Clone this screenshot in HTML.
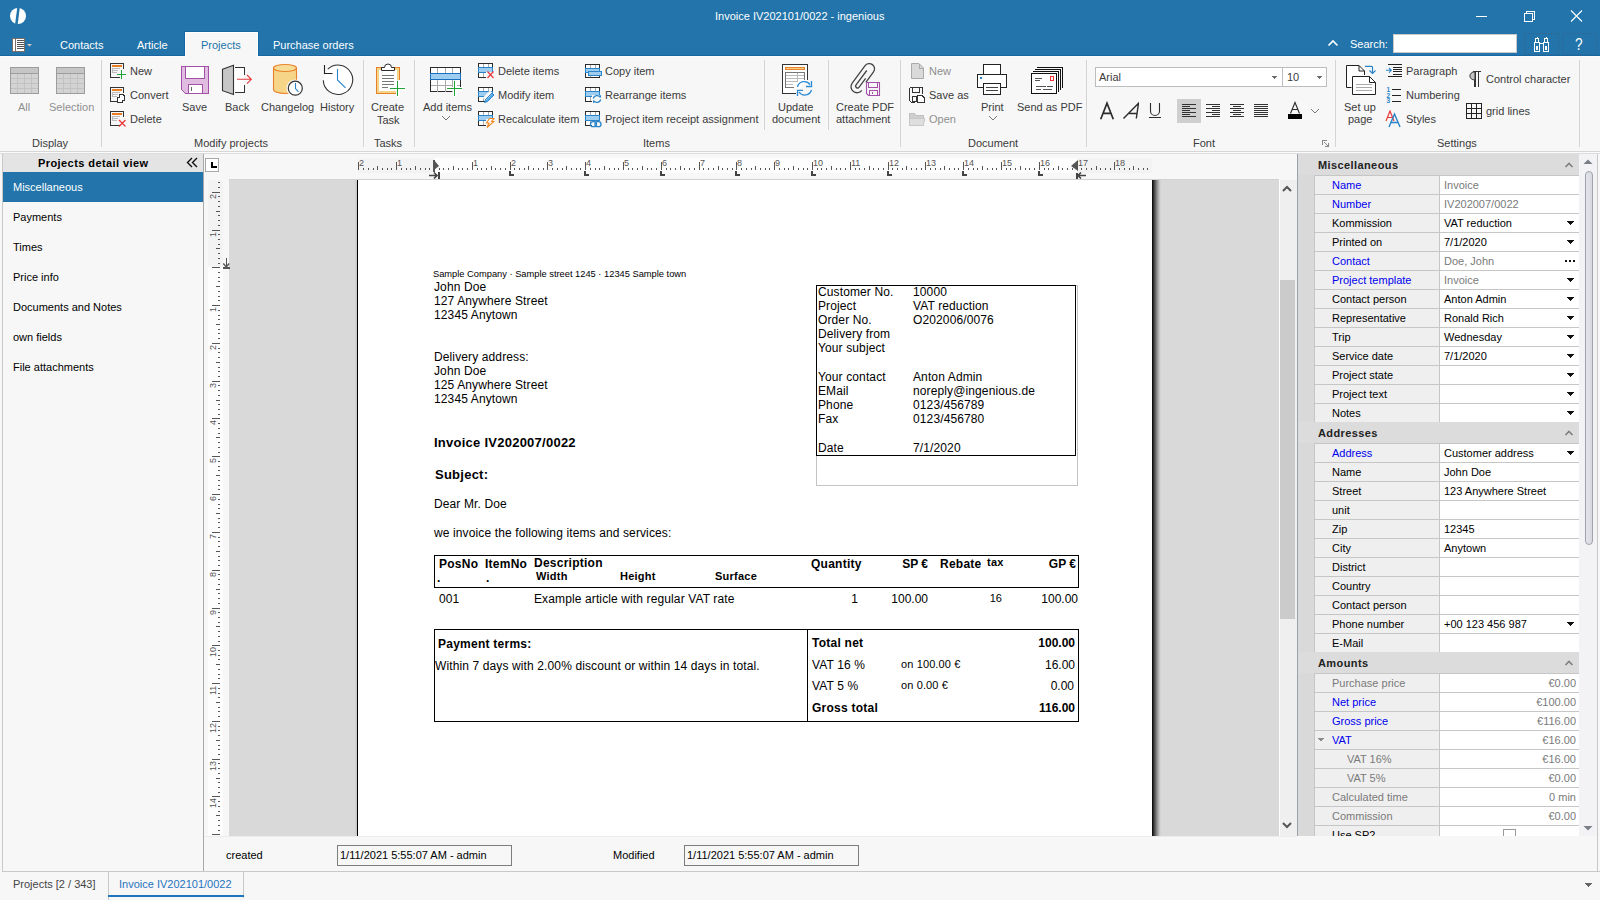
<!DOCTYPE html>
<html><head><meta charset="utf-8"><title>Invoice IV202101/0022 - ingenious</title>
<style>
html,body{margin:0;padding:0;width:1600px;height:900px;overflow:hidden;background:#f7f7f7;}
body{position:relative;font-family:"Liberation Sans",sans-serif;}
.t{position:absolute;white-space:nowrap;line-height:1;font-family:"Liberation Sans",sans-serif;}
.d{position:absolute;white-space:nowrap;line-height:1;font-family:"Liberation Sans",sans-serif;}
.r{position:absolute;display:block;}
svg{shape-rendering:crispEdges;}
svg .a{shape-rendering:geometricPrecision;}
</style></head><body>

<div class="r" style="left:0px;top:0px;width:1600px;height:56px;background:#2274aa;"></div>
<svg class="r" style="left:8px;top:6px;shape-rendering:geometricPrecision" width="20" height="20" viewBox="0 0 20 20"><g class="a"><circle cx="10" cy="10" r="8" fill="#fff"/><path d="M9.3 1 L11.9 1 L9.6 19 L7.0 19 Z" fill="#2274aa"/></g></svg>
<div class="t" style="left:715px;top:11px;font-size:11px;color:#fff;">Invoice IV202101/0022 - ingenious</div>
<div class="r" style="left:1476px;top:16px;width:11px;height:1px;background:#fff;"></div>
<svg class="r" style="left:1520px;top:8px;" width="16" height="16" viewBox="0 0 16 16"><rect x="4.5" y="5.5" width="8" height="8" fill="none" stroke="#fff"/><path d="M6.5 5.5 V3.5 H14.5 V11.5 H12.5" fill="none" stroke="#fff"/></svg>
<svg class="r" style="left:1568px;top:8px;shape-rendering:geometricPrecision" width="16" height="16" viewBox="0 0 16 16"><path class="a" d="M3 2.5 L14 13.5 M14 2.5 L3 13.5" stroke="#fff" stroke-width="1.1"/></svg>
<svg class="r" style="left:10px;top:36px;" width="24" height="18" viewBox="0 0 24 18"><rect x="2.5" y="2.5" width="12" height="13" fill="#fff" stroke="#7a6e66"/><rect x="5" y="3" width="1" height="12" fill="#7a6e66"/><rect x="7" y="4" width="7" height="1" fill="#555"/><rect x="7" y="6" width="7" height="1" fill="#555"/><rect x="7" y="8" width="7" height="1" fill="#555"/><rect x="7" y="10" width="7" height="1" fill="#555"/><rect x="7" y="12" width="7" height="1" fill="#555"/><path d="M17 8 h5 l-2.5 2.6 z" fill="#d0c8c0" style="shape-rendering:geometricPrecision"/></svg>
<div class="t" style="left:60px;top:40px;font-size:11px;color:#fff;">Contacts</div>
<div class="t" style="left:137px;top:40px;font-size:11px;color:#fff;">Article</div>
<div class="r" style="left:0px;top:55px;width:1600px;height:1px;background:#1768a2;"></div>
<div class="r" style="left:0px;top:56px;width:1600px;height:1px;background:#fdfdfd;"></div>
<div class="r" style="left:184px;top:31px;width:75px;height:25px;background:#1768a2;"></div>
<div class="r" style="left:185px;top:32px;width:73px;height:25px;background:#fff;"></div>
<div class="r" style="left:186px;top:33px;width:71px;height:24px;background:#f7f7f7;"></div>
<div class="t" style="left:201px;top:40px;font-size:11px;color:#2274aa;">Projects</div>
<div class="t" style="left:273px;top:40px;font-size:11px;color:#fff;">Purchase orders</div>
<svg class="r" style="left:1326px;top:38px;shape-rendering:geometricPrecision" width="14" height="10" viewBox="0 0 14 10"><path class="a" d="M2.5 7.5 L7 3 L11.5 7.5" fill="none" stroke="#fff" stroke-width="1.6"/></svg>
<div class="t" style="left:1350px;top:39px;font-size:11px;color:#fff;">Search:</div>
<div class="r" style="left:1393px;top:34px;width:124px;height:19px;background:#fff;box-sizing:border-box;border:1px solid #c9c9c9"></div>
<div class="r" style="left:1524px;top:33px;width:35px;height:22px;background:transparent;box-sizing:border-box;border:1px solid #2a6d9c"></div>
<svg class="r" style="left:1533px;top:35px;" width="18" height="18" viewBox="0 0 18 18"><g fill="none" stroke="#fff"><rect x="1.5" y="7.5" width="5" height="9"/><rect x="10.5" y="7.5" width="5" height="9"/><rect x="2.5" y="3.5" width="3" height="4"/><rect x="11.5" y="3.5" width="3" height="4"/><path d="M6.5 8.5 H10.5 M4 1.5 V3.5 M13 1.5 V3.5"/><rect x="3.5" y="11.5" width="1" height="3"/><rect x="12.5" y="11.5" width="1" height="3"/></g></svg>
<div class="r" style="left:1562px;top:33px;width:35px;height:22px;background:transparent;box-sizing:border-box;border:1px solid #2a6d9c"></div>
<div class="t" style="left:1575px;top:37px;font-size:16px;color:#fff;transform:scaleX(0.85);transform-origin:left">?</div>
<div class="r" style="left:0px;top:151px;width:1600px;height:1px;background:#d6d6d6;"></div>
<div class="r" style="left:0px;top:152px;width:1600px;height:1px;background:#fbfbfb;"></div>
<div class="r" style="left:0px;top:153px;width:1600px;height:1px;background:#dcdcdc;"></div>
<div class="r" style="left:101px;top:60px;width:1px;height:87px;background:#d4d4d4;"></div>
<div class="r" style="left:363px;top:60px;width:1px;height:87px;background:#d4d4d4;"></div>
<div class="r" style="left:414px;top:60px;width:1px;height:87px;background:#d4d4d4;"></div>
<div class="r" style="left:900px;top:60px;width:1px;height:87px;background:#d4d4d4;"></div>
<div class="r" style="left:1086px;top:60px;width:1px;height:87px;background:#d4d4d4;"></div>
<div class="r" style="left:1335px;top:60px;width:1px;height:87px;background:#d4d4d4;"></div>
<div class="r" style="left:1579px;top:60px;width:1px;height:87px;background:#d4d4d4;"></div>
<div class="r" style="left:764px;top:60px;width:1px;height:70px;background:#d4d4d4;"></div>
<div class="r" style="left:828px;top:60px;width:1px;height:70px;background:#d4d4d4;"></div>
<div class="t" style="left:32px;top:138px;font-size:11px;color:#3b3b3b;">Display</div>
<div class="t" style="left:194px;top:138px;font-size:11px;color:#3b3b3b;">Modify projects</div>
<div class="t" style="left:374px;top:138px;font-size:11px;color:#3b3b3b;">Tasks</div>
<div class="t" style="left:643px;top:138px;font-size:11px;color:#3b3b3b;">Items</div>
<div class="t" style="left:968px;top:138px;font-size:11px;color:#3b3b3b;">Document</div>
<div class="t" style="left:1193px;top:138px;font-size:11px;color:#3b3b3b;">Font</div>
<div class="t" style="left:1437px;top:138px;font-size:11px;color:#3b3b3b;">Settings</div>
<svg class="r" style="left:10px;top:67px;" width="30" height="28" viewBox="0 0 30 28"><rect x="0.5" y="0.5" width="28" height="26" fill="#d3d3d3" stroke="#9c9c9c"/><rect x="1" y="1" width="27" height="5" fill="#c6c6c6"/><path d="M1 6.5 H28" stroke="#9c9c9c"/><path d="M7.5 7 V26 M14.5 7 V26 M21.5 7 V26 M1 11.5 H28 M1 16.5 H28 M1 21.5 H28" stroke="#c2c2c2"/></svg>
<svg class="r" style="left:56px;top:67px;" width="30" height="28" viewBox="0 0 30 28"><rect x="0.5" y="0.5" width="28" height="26" fill="#d3d3d3" stroke="#9c9c9c"/><rect x="1" y="1" width="27" height="5" fill="#c6c6c6"/><path d="M1 6.5 H28" stroke="#9c9c9c"/><path d="M7.5 7 V26 M14.5 7 V26 M21.5 7 V26 M1 11.5 H28 M1 16.5 H28 M1 21.5 H28" stroke="#c2c2c2"/></svg>
<div class="t" style="left:18px;top:102px;font-size:11px;color:#8f8f8f;">All</div>
<div class="t" style="left:49px;top:102px;font-size:11px;color:#8f8f8f;">Selection</div>
<svg class="r" style="left:110px;top:63px;" width="17" height="17" viewBox="0 0 17 17"><path d="M9.5 14.5 H0.5 V0.5 H13.5 V6" fill="none" stroke="#333"/><rect x="2" y="2" width="10" height="2" fill="#e87d22"/><rect x="2" y="5" width="8" height="1" fill="#bbb"/><rect x="2" y="7" width="6" height="1" fill="#bbb"/><rect x="2" y="9" width="5" height="1" fill="#bbb"/><rect x="2" y="6" width="1" height="4" fill="#bbb"/><path d="M7 11.5 H16 M11.5 7 V16" stroke="#1fa43a" stroke-width="1.2"/></svg>
<svg class="r" style="left:110px;top:87px;" width="17" height="17" viewBox="0 0 17 17"><path d="M9.5 14.5 H0.5 V0.5 H13.5 V6" fill="none" stroke="#333"/><rect x="2" y="2" width="10" height="2" fill="#e87d22"/><rect x="2" y="5" width="8" height="1" fill="#bbb"/><rect x="2" y="7" width="6" height="1" fill="#bbb"/><rect x="2" y="9" width="5" height="1" fill="#bbb"/><rect x="2" y="6" width="1" height="4" fill="#bbb"/><rect x="7.5" y="10.5" width="5" height="5" fill="#fff" stroke="#333"/><path d="M9.5 10.5 V7.5 H13 L14.5 9 V13.5 H12.5" fill="#fff" stroke="#333"/></svg>
<svg class="r" style="left:110px;top:111px;" width="17" height="17" viewBox="0 0 17 17"><path d="M9.5 14.5 H0.5 V0.5 H13.5 V6" fill="none" stroke="#333"/><rect x="2" y="2" width="10" height="2" fill="#e87d22"/><rect x="2" y="5" width="8" height="1" fill="#bbb"/><rect x="2" y="7" width="6" height="1" fill="#bbb"/><rect x="2" y="9" width="5" height="1" fill="#bbb"/><rect x="2" y="6" width="1" height="4" fill="#bbb"/><path class="a" d="M9 9 L15.5 15.5 M15.5 9 L9 15.5" stroke="#e33" stroke-width="1.2" style="shape-rendering:geometricPrecision"/></svg>
<div class="t" style="left:130px;top:66px;font-size:11px;color:#3b3b3b;">New</div>
<div class="t" style="left:130px;top:90px;font-size:11px;color:#3b3b3b;">Convert</div>
<div class="t" style="left:130px;top:114px;font-size:11px;color:#3b3b3b;">Delete</div>
<svg class="r" style="left:181px;top:66px;" width="29" height="29" viewBox="0 0 29 29"><path d="M0.5 0.5 H27.5 V27.5 H4.5 L0.5 23.5 Z" fill="#e0bde0" stroke="#a350a8"/><rect x="4.5" y="0.5" width="19" height="12" fill="#fff" stroke="#a350a8"/><rect x="7.5" y="18.5" width="14" height="9" fill="#fff" stroke="#a350a8"/><rect x="10" y="21" width="1" height="4" fill="#666"/></svg>
<div class="t" style="left:182px;top:102px;font-size:11px;color:#3b3b3b;">Save</div>
<svg class="r" style="left:218px;top:60px;" width="40" height="40" viewBox="0 0 40 40"><rect x="16" y="7" width="10" height="26" fill="#fff"/><path d="M4.5 9.3 L15.5 5.3 V34.5 L4.5 30.7 Z" fill="#c6c6c6" stroke="#333" stroke-width="1.1" style="shape-rendering:geometricPrecision"/><path d="M17 7.5 H26.5 V14.5 M26.5 24.5 V32.5 H17" fill="none" stroke="#333"/><path d="M19 19.3 H33.2 M29 15 L33.3 19.3 L29 23.6" fill="none" stroke="#e83a3a" stroke-width="1.1" style="shape-rendering:geometricPrecision"/></svg>
<div class="t" style="left:225px;top:102px;font-size:11px;color:#3b3b3b;">Back</div>
<svg class="r" style="left:272px;top:63px;" width="34" height="34" viewBox="0 0 34 34"><g style="shape-rendering:geometricPrecision"><path d="M1.5 5 V26.5 A11.5 4 0 0 0 24.5 26.5 V5 Z" fill="#f6d588" stroke="#e8822a" stroke-width="1.1"/><ellipse cx="13" cy="5" rx="11.5" ry="3.5" fill="#f7dc98" stroke="#e8822a" stroke-width="1.1"/><circle cx="23.3" cy="25.2" r="8.8" fill="#f7f7f7"/><circle cx="23.3" cy="25.2" r="7" fill="#fff" stroke="#333" stroke-width="1.2"/><path d="M23.5 20 V25.5 L26.5 28.8" fill="none" stroke="#2a84c9" stroke-width="1.1"/></g></svg>
<div class="t" style="left:261px;top:102px;font-size:11px;color:#3b3b3b;">Changelog</div>
<svg class="r" style="left:318px;top:60px;" width="40" height="40" viewBox="0 0 40 40"><g style="shape-rendering:geometricPrecision" fill="none"><circle cx="20" cy="19.8" r="14.2" fill="#fff" stroke="none"/><path d="M5.3 20.2 A14.7 14.7 0 1 0 9.8 9.2" stroke="#333" stroke-width="1.1"/><path d="M6.5 5 V13.5 H14.5" stroke="#222" stroke-width="1.1"/><path d="M19.5 9 V20 L27.5 27.8" stroke="#2a84c9" stroke-width="1.1"/></g></svg>
<div class="t" style="left:320px;top:102px;font-size:11px;color:#3b3b3b;">History</div>
<svg class="r" style="left:370px;top:60px;" width="40" height="40" viewBox="0 0 40 40"><rect x="6.5" y="7.5" width="23" height="26" fill="#f6d588" stroke="#e8822a"/><rect x="9" y="10" width="18" height="21" fill="#fff"/><path d="M11.5 7.5 H14.5 A3.5 3.5 0 0 1 21.5 7.5 H24.5 V10.5 H11.5 Z" fill="#fff" stroke="#2b2b2b" style="shape-rendering:geometricPrecision"/><path d="M12 15.5 H24 M12 18.5 H24 M12 21.5 H24 M12 24.5 H24 M12 27.5 H18" stroke="#777"/><path d="M19 28.5 H36 M27.5 20 V37" stroke="#fff" stroke-width="4"/><path d="M20 28.5 H35 M27.5 21 V36" stroke="#1fa43a" stroke-width="1.3"/></svg>
<div class="t" style="left:371px;top:102px;font-size:11px;color:#3b3b3b;">Create</div>
<div class="t" style="left:377px;top:115px;font-size:11px;color:#3b3b3b;">Task</div>
<svg class="r" style="left:425px;top:60px;" width="40" height="40" viewBox="0 0 40 40"><rect x="5.5" y="7.5" width="30" height="24" fill="#fff" stroke="#2b2b2b"/><path d="M12.5 8 V13 M20.5 8 V13 M27.5 8 V13 M12.5 20 V32 M20.5 20 V32 M27.5 20 V32 M6 25.5 H35" stroke="#aaa"/><rect x="5.6" y="13.6" width="29.8" height="5.8" fill="#9fcdf0" stroke="#1a6fc0" stroke-width="1.2"/><rect x="31" y="29.5" width="6" height="4" fill="#f7f7f7"/><path d="M21 28.5 H38 M29.5 20 V37" stroke="#fff" stroke-width="4"/><path d="M22 28.5 H37 M29.5 21 V36" stroke="#1fa43a" stroke-width="1.3"/></svg>
<div class="t" style="left:423px;top:102px;font-size:11px;color:#3b3b3b;">Add items</div>
<svg class="r" style="left:441px;top:115px;" width="10" height="6" viewBox="0 0 10 6"><path d="M1 1 L5 5 L9 1" fill="none" stroke="#777" style="shape-rendering:geometricPrecision"/></svg>
<svg class="r" style="left:478px;top:63px;" width="17" height="17" viewBox="0 0 17 17"><rect x="0.5" y="0.5" width="14" height="14" fill="#fff" stroke="#2b2b2b"/><path d="M5.5 1 V4 M10.5 1 V4 M5.5 10 V14 M10.5 10 V14" stroke="#aaa"/><rect x="0.5" y="4.5" width="14" height="5" fill="#9fcdf0" stroke="#2a84c9"/><rect x="8" y="9" width="8" height="8" fill="#f7f7f7"/><path d="M9.5 8.5 L15.5 15 M15.5 8.5 L9.5 15" stroke="#e8393f" stroke-width="1.2" style="shape-rendering:geometricPrecision"/></svg>
<svg class="r" style="left:478px;top:87px;" width="17" height="17" viewBox="0 0 17 17"><rect x="0.5" y="0.5" width="14" height="14" fill="#fff" stroke="#2b2b2b"/><path d="M5.5 1 V4 M10.5 1 V4 M5.5 10 V14 M10.5 10 V14" stroke="#aaa"/><rect x="0.5" y="4.5" width="14" height="5" fill="#9fcdf0" stroke="#2a84c9"/><rect x="7" y="6" width="10" height="10" fill="#f7f7f7" transform="rotate(-45 11.5 11)" style="shape-rendering:geometricPrecision"/><path d="M6.5 15.5 L7.5 12.5 L14 6 L16 8 L9.5 14.5 Z" fill="#5aaae6" stroke="#2a84c9" style="shape-rendering:geometricPrecision"/><path d="M8.5 12.5 L14 7" stroke="#fff" stroke-width="0.6" stroke-dasharray="1 1" style="shape-rendering:geometricPrecision"/></svg>
<svg class="r" style="left:478px;top:111px;" width="17" height="17" viewBox="0 0 17 17"><rect x="0.5" y="0.5" width="14" height="14" fill="#fff" stroke="#2b2b2b"/><path d="M5.5 1 V4 M10.5 1 V4 M5.5 10 V14 M10.5 10 V14" stroke="#aaa"/><rect x="0.5" y="4.5" width="14" height="5" fill="#9fcdf0" stroke="#2a84c9"/><rect x="8" y="8" width="9" height="9" fill="#f7f7f7"/><path d="M11.5 7.5 H16 L13.5 10.5 H16 L9 16.5 L11 12 H8.5 Z" fill="#fff" stroke="#ef8a22" stroke-width="1.1" style="shape-rendering:geometricPrecision"/></svg>
<div class="t" style="left:498px;top:66px;font-size:11px;color:#3b3b3b;">Delete items</div>
<div class="t" style="left:498px;top:90px;font-size:11px;color:#3b3b3b;">Modify item</div>
<div class="t" style="left:498px;top:114px;font-size:11px;color:#3b3b3b;">Recalculate item</div>
<svg class="r" style="left:585px;top:64px;" width="17" height="17" viewBox="0 0 17 17"><rect x="0.5" y="0.5" width="14" height="13" fill="#fff" stroke="#2b2b2b"/><path d="M5.5 1 V4 M10.5 1 V4 M5.5 10 V13" stroke="#aaa"/><rect x="0.5" y="4.5" width="14" height="4" fill="#9fcdf0" stroke="#2a84c9"/><rect x="3.5" y="7.5" width="13" height="4" fill="#9fcdf0" stroke="#2a84c9"/></svg>
<svg class="r" style="left:585px;top:87px;" width="17" height="17" viewBox="0 0 17 17"><rect x="0.5" y="0.5" width="14" height="14" fill="#fff" stroke="#2b2b2b"/><path d="M5.5 1 V4 M10.5 1 V4 M5.5 10 V14 M10.5 10 V14" stroke="#aaa"/><rect x="0.5" y="4.5" width="14" height="5" fill="#9fcdf0" stroke="#2a84c9"/><rect x="7" y="8" width="10" height="9" fill="#f7f7f7"/><g style="shape-rendering:geometricPrecision" fill="none" stroke="#2a84c9" stroke-width="1.3"><path d="M8.2 11.5 A4 4 0 0 1 15.2 10.2"/><path d="M15.8 12.5 A4 4 0 0 1 8.8 13.8"/></g><path d="M13.5 9 L16 8 L16 11 Z M10.5 15 L8 16 L8 13 Z" fill="#2a84c9" style="shape-rendering:geometricPrecision"/></svg>
<svg class="r" style="left:585px;top:111px;" width="17" height="17" viewBox="0 0 17 17"><rect x="0.5" y="0.5" width="14" height="14" fill="#fff" stroke="#2b2b2b"/><path d="M5.5 1 V4 M10.5 1 V4 M5.5 10 V14 M10.5 10 V14" stroke="#aaa"/><rect x="0.5" y="4.5" width="14" height="5" fill="#9fcdf0" stroke="#2a84c9"/><rect x="7" y="10" width="10" height="7" fill="#f7f7f7"/><g style="shape-rendering:geometricPrecision" fill="none" stroke="#2a84c9" stroke-width="1.3"><rect x="5.5" y="10.7" width="6" height="5" rx="2.5"/><rect x="10" y="10.7" width="6" height="5" rx="2.5"/></g></svg>
<div class="t" style="left:605px;top:66px;font-size:11px;color:#3b3b3b;">Copy item</div>
<div class="t" style="left:605px;top:90px;font-size:11px;color:#3b3b3b;">Rearrange items</div>
<div class="t" style="left:605px;top:114px;font-size:11px;color:#3b3b3b;">Project item receipt assignment</div>
<svg class="r" style="left:778px;top:60px;" width="36" height="38" viewBox="0 0 36 38"><path d="M17.5 33.5 H4.5 V4.5 H29.5 V19.5" fill="#fff" stroke="#333" stroke-width="1.2"/><rect x="7.5" y="7.5" width="19" height="2" fill="#f6d588" stroke="#e8822a"/><path d="M15.5 27.5 H7.5 V12.5 H26.5 V20" fill="none" stroke="#777"/><path d="M8 15.5 H26 M8 18.5 H26 M8 21.5 H20 M8 24.5 H15 M19.5 13 V21" stroke="#bbb"/><g style="shape-rendering:geometricPrecision" fill="none" stroke="#2a8ad4" stroke-width="1.3"><path d="M19.5 27 A7 7 0 0 1 32 24.5"/><path d="M33.5 30 A7 7 0 0 1 21 32"/><path d="M28 26.5 H33.5 V21"/><path d="M25 30.3 H19.5 V36"/></g></svg>
<div class="t" style="left:778px;top:102px;font-size:11px;color:#3b3b3b;">Update</div>
<div class="t" style="left:772px;top:114px;font-size:11px;color:#3b3b3b;">document</div>
<svg class="r" style="left:845px;top:60px;" width="38" height="38" viewBox="0 0 38 38"><g transform="translate(18.45,18) rotate(36.5)" fill="none" stroke="#444" stroke-width="1.3" style="shape-rendering:geometricPrecision"><path d="M6 10.85 A6 6 0 0 1 -6 10.85 L-6 -10.85 A5.25 5.25 0 0 1 4.5 -10.85 L4.5 2"/><path d="M-1.8 -8 L-1.8 10 A1.9 1.9 0 0 0 2 10 L2 -1"/></g><path d="M21.5 22.5 H34.5 V35.5 H23.5 L21.5 33.5 Z" fill="#f7f7f7" stroke="#a350a8" stroke-width="1.1" style="shape-rendering:geometricPrecision"/><path d="M23.5 22.5 V27.5 H32.5 V22.5" fill="none" stroke="#a350a8"/><path d="M24.5 35.5 V30.5 H32.5 V35.5" fill="none" stroke="#a350a8"/><rect x="27" y="32" width="1" height="2" fill="#a350a8"/></svg>
<div class="t" style="left:836px;top:102px;font-size:11px;color:#3b3b3b;">Create PDF</div>
<div class="t" style="left:836px;top:114px;font-size:11px;color:#3b3b3b;">attachment</div>
<svg class="r" style="left:910px;top:62px;" width="16" height="18" viewBox="0 0 16 18"><path d="M1.5 1.5 H9 L13.5 6 V16.5 H1.5 Z" fill="#d9d9d9" stroke="#aaa" style="shape-rendering:geometricPrecision"/><path d="M9 1.5 V6 H13.5" fill="none" stroke="#aaa"/></svg>
<div class="t" style="left:929px;top:66px;font-size:11px;color:#8f8f8f;">New</div>
<svg class="r" style="left:908px;top:86px;" width="18" height="18" viewBox="0 0 18 18"><path d="M1.5 1.5 H14.5 V8 M1.5 1.5 V14.5 L3.5 16.5 H7" fill="none" stroke="#333"/><path d="M4.5 1.5 V6.5 H11.5 V1.5" fill="none" stroke="#333"/><rect x="4.5" y="10.5" width="4" height="5" fill="none" stroke="#333"/><path d="M9.5 9.5 H14 L16.5 12 V16.5 H9.5 Z" fill="#fff" stroke="#333"/></svg>
<div class="t" style="left:929px;top:90px;font-size:11px;color:#3b3b3b;">Save as</div>
<svg class="r" style="left:908px;top:110px;" width="18" height="18" viewBox="0 0 18 18"><path d="M1.5 3.5 H6.5 L8 5 H15.5 V15.5 H1.5 Z" fill="#cfcfcf" stroke="#c0c0c0"/><path d="M1.5 8.5 H16.5 L15.5 15.5 H1.5 Z" fill="#dedede" stroke="#c8c8c8"/></svg>
<div class="t" style="left:929px;top:114px;font-size:11px;color:#8f8f8f;">Open</div>
<svg class="r" style="left:977px;top:64px;" width="32" height="32" viewBox="0 0 32 32"><rect x="6.5" y="0.5" width="17" height="10" fill="#fff" stroke="#222"/><rect x="0.5" y="10.5" width="29" height="13" fill="#fff" stroke="#222"/><rect x="3" y="13" width="2" height="2" fill="#2a84c9"/><rect x="6.5" y="19.5" width="17" height="11" fill="#fff" stroke="#222"/><path d="M9 23.5 H21 M9 26.5 H21" stroke="#444"/></svg>
<div class="t" style="left:981px;top:102px;font-size:11px;color:#3b3b3b;">Print</div>
<svg class="r" style="left:988px;top:115px;" width="10" height="6" viewBox="0 0 10 6"><path d="M1 1 L5 5 L9 1" fill="none" stroke="#777" style="shape-rendering:geometricPrecision"/></svg>
<svg class="r" style="left:1031px;top:67px;" width="35" height="28" viewBox="0 0 35 28"><path d="M5.5 0.5 H31.5 V21 M4 2.5 H29.5 V23 M2 4.5 H27.5 V25" fill="none" stroke="#111"/><rect x="0.5" y="6.5" width="25" height="20" fill="#fff" stroke="#111"/><path d="M4 11.5 H11 M4 13.5 H9 M5 19.5 H15 M5 22.5 H10 M12 22.5 H21 M16 19.5 H22" stroke="#555"/><rect x="19.5" y="9.5" width="3" height="4" fill="none" stroke="#e33"/></svg>
<div class="t" style="left:1017px;top:102px;font-size:11px;color:#3b3b3b;">Send as PDF</div>
<div class="r" style="left:1095px;top:67px;width:232px;height:20px;background:#fff;box-sizing:border-box;border:1px solid #bdbdbd"></div>
<div class="r" style="left:1282px;top:68px;width:1px;height:18px;background:#bdbdbd;"></div>
<div class="t" style="left:1099px;top:72px;font-size:11px;color:#3b3b3b;">Arial</div>
<div class="t" style="left:1287px;top:72px;font-size:11px;color:#3b3b3b;">10</div>
<svg class="r" style="left:1271px;top:76px;" width="7" height="4" viewBox="0 0 7 4"><path d="M0 0 H6 L3 3 Z" fill="#6d6d6d"/></svg>
<svg class="r" style="left:1316px;top:76px;" width="7" height="4" viewBox="0 0 7 4"><path d="M0 0 H6 L3 3 Z" fill="#6d6d6d"/></svg>
<svg class="r" style="left:1098px;top:101px;" width="18" height="19" viewBox="0 0 18 19"><path d="M3 17.5 L9 2.2 L15 17.5 M5.6 12.3 H12.4" fill="none" stroke="#2b2b2b" stroke-width="1.7" stroke-linecap="square" style="shape-rendering:geometricPrecision"/></svg>
<svg class="r" style="left:1121px;top:101px;" width="18" height="19" viewBox="0 0 18 19"><path d="M2.5 17.5 L17.5 2.3 L15.3 17.5 M8.2 12.5 H16" fill="none" stroke="#2b2b2b" stroke-width="1.4" style="shape-rendering:geometricPrecision"/></svg>
<svg class="r" style="left:1148px;top:102px;" width="14" height="18" viewBox="0 0 14 18"><path d="M2.5 1 V9 A4.5 4.5 0 0 0 11.5 9 V1" fill="none" stroke="#2b2b2b" stroke-width="1.1" style="shape-rendering:geometricPrecision"/><rect x="1" y="15" width="12" height="1" fill="#2b2b2b"/></svg>
<div class="r" style="left:1177px;top:99px;width:24px;height:24px;background:#cfcfcf;"></div>
<svg class="r" style="left:1182px;top:104px;" width="15" height="14" viewBox="0 0 15 14"><rect x="0" y="0" width="14" height="1" fill="#333"/><rect x="0" y="2" width="8" height="1" fill="#333"/><rect x="0" y="4" width="14" height="1" fill="#333"/><rect x="0" y="6" width="8" height="1" fill="#333"/><rect x="0" y="8" width="14" height="1" fill="#333"/><rect x="0" y="10" width="8" height="1" fill="#333"/><rect x="0" y="12" width="14" height="1" fill="#333"/></svg>
<svg class="r" style="left:1206px;top:104px;" width="15" height="14" viewBox="0 0 15 14"><rect x="0" y="0" width="14" height="1" fill="#333"/><rect x="6" y="2" width="8" height="1" fill="#333"/><rect x="0" y="4" width="14" height="1" fill="#333"/><rect x="6" y="6" width="8" height="1" fill="#333"/><rect x="0" y="8" width="14" height="1" fill="#333"/><rect x="6" y="10" width="8" height="1" fill="#333"/><rect x="0" y="12" width="14" height="1" fill="#333"/></svg>
<svg class="r" style="left:1230px;top:104px;" width="15" height="14" viewBox="0 0 15 14"><rect x="0.0" y="0" width="14" height="1" fill="#333"/><rect x="3.0" y="2" width="8" height="1" fill="#333"/><rect x="0.0" y="4" width="14" height="1" fill="#333"/><rect x="3.0" y="6" width="8" height="1" fill="#333"/><rect x="0.0" y="8" width="14" height="1" fill="#333"/><rect x="3.0" y="10" width="8" height="1" fill="#333"/><rect x="0.0" y="12" width="14" height="1" fill="#333"/></svg>
<svg class="r" style="left:1254px;top:104px;" width="15" height="14" viewBox="0 0 15 14"><rect x="0" y="0" width="14" height="1" fill="#333"/><rect x="0" y="2" width="14" height="1" fill="#333"/><rect x="0" y="4" width="14" height="1" fill="#333"/><rect x="0" y="6" width="14" height="1" fill="#333"/><rect x="0" y="8" width="14" height="1" fill="#333"/><rect x="0" y="10" width="14" height="1" fill="#333"/><rect x="0" y="12" width="14" height="1" fill="#333"/></svg>
<svg class="r" style="left:1288px;top:101px;" width="15" height="13" viewBox="0 0 15 13"><path d="M2.5 12.5 L7 1.5 L11.5 12.5 M4.3 8.5 H9.7" fill="none" stroke="#2b2b2b" stroke-width="1.1" style="shape-rendering:geometricPrecision"/></svg>
<div class="r" style="left:1288px;top:114px;width:14px;height:5px;background:#000;"></div>
<svg class="r" style="left:1310px;top:108px;" width="10" height="6" viewBox="0 0 10 6"><path d="M1 1 L5 5 L9 1" fill="none" stroke="#777" style="shape-rendering:geometricPrecision"/></svg>
<svg class="r" style="left:1322px;top:140px;" width="7" height="7" viewBox="0 0 7 7"><path d="M0.5 5 V0.5 H5" fill="none" stroke="#888"/><path d="M2 2 L6 6 M6 3 V6 H3" fill="none" stroke="#888"/></svg>
<svg class="r" style="left:1345px;top:64px;" width="33" height="33" viewBox="0 0 33 33"><path d="M6.5 23.5 H1.5 V1.5 H14 L19.5 7 V11" fill="#fff" stroke="#222" style="shape-rendering:geometricPrecision"/><path d="M14 1.5 V7 H19.5" fill="none" stroke="#222" style="shape-rendering:geometricPrecision"/><path d="M7.5 12.5 H24.5 L30.5 18.5 V30.5 H7.5 Z" fill="#fff" stroke="#222" style="shape-rendering:geometricPrecision"/><path d="M24.5 12.5 V18.5 H30.5" fill="none" stroke="#222" style="shape-rendering:geometricPrecision"/><path d="M10.5 20.5 H27 M10.5 23.5 H27 M10.5 26.5 H27" stroke="#aaa"/><path d="M20 2.3 H26.5 A1 1 0 0 1 27.5 3.3 V9" fill="none" stroke="#2a84c9" stroke-width="1.2" style="shape-rendering:geometricPrecision"/><path d="M24.5 6.5 L27.5 9.5 L30.5 6.5" fill="none" stroke="#2a84c9" stroke-width="1.2" style="shape-rendering:geometricPrecision"/></svg>
<div class="t" style="left:1344px;top:102px;font-size:11px;color:#3b3b3b;">Set up</div>
<div class="t" style="left:1348px;top:114px;font-size:11px;color:#3b3b3b;">page</div>
<svg class="r" style="left:1386px;top:62px;" width="17" height="17" viewBox="0 0 17 17"><path d="M2 2.5 H16 M7 5.5 H16 M7 7.5 H16 M7 9.5 H16 M7 12 H16 M2 14.5 H16" stroke="#222"/><path d="M0 8.3 H5 M3 6 L5.3 8.3 L3 10.6" fill="none" stroke="#2a84c9" stroke-width="1.1" style="shape-rendering:geometricPrecision"/></svg>
<div class="t" style="left:1406px;top:66px;font-size:11px;color:#3b3b3b;">Paragraph</div>
<svg class="r" style="left:1386px;top:86px;" width="17" height="18" viewBox="0 0 17 18"><path d="M6 3.5 H15 M6 9.5 H15 M6 15.5 H15" stroke="#222"/><text x="0.6" y="6" font-size="6.5" font-weight="bold" fill="#2a84c9" font-family="Liberation Sans">1</text><text x="0.6" y="11.5" font-size="6.5" font-weight="bold" fill="#2a84c9" font-family="Liberation Sans">2</text><text x="0.6" y="17" font-size="6.5" font-weight="bold" fill="#2a84c9" font-family="Liberation Sans">3</text></svg>
<div class="t" style="left:1406px;top:90px;font-size:11px;color:#3b3b3b;">Numbering</div>
<svg class="r" style="left:1385px;top:110px;" width="18" height="18" viewBox="0 0 18 18"><g style="shape-rendering:geometricPrecision" fill="none" stroke-width="1.2"><path d="M1 11 L5 1 L9 11 M2.5 7.5 H7.5" stroke="#e83a3a"/><path d="M4 17 L9.5 4 L15 17 M6 12.5 H13" stroke="#2a84c9" stroke-width="1.4"/></g></svg>
<div class="t" style="left:1406px;top:114px;font-size:11px;color:#3b3b3b;">Styles</div>
<svg class="r" style="left:1467px;top:70px;" width="15" height="18" viewBox="0 0 15 18"><path d="M6 1.5 H14" stroke="#333"/><path d="M8 1.5 V17 M11.5 1.5 V17" stroke="#333" stroke-width="1.2"/><path d="M8 1.8 C1.2 1.8 1.2 10 8 10 Z" fill="#c4c4c4" stroke="#333" style="shape-rendering:geometricPrecision"/></svg>
<div class="t" style="left:1486px;top:74px;font-size:11px;color:#3b3b3b;">Control character</div>
<svg class="r" style="left:1466px;top:103px;" width="17" height="17" viewBox="0 0 17 17"><rect x="0.5" y="0.5" width="15" height="15" fill="none" stroke="#222"/><path d="M5.5 0 V16 M10.5 0 V16 M0 5.5 H16 M0 10.5 H16" stroke="#222"/></svg>
<div class="t" style="left:1486px;top:106px;font-size:11px;color:#3b3b3b;">grid lines</div>
<div class="r" style="left:2px;top:154px;width:1px;height:717px;background:#c8c8c8;"></div>
<div class="r" style="left:203px;top:154px;width:1px;height:717px;background:#a9a9a9;"></div>
<div class="r" style="left:3px;top:154px;width:200px;height:18px;background:#e4e4e4;"></div>
<div class="t" style="left:38px;top:158px;font-size:11px;color:#000;font-weight:bold;letter-spacing:0.42px">Projects detail view</div>
<svg class="r" style="left:184px;top:156px;" width="16" height="14" viewBox="0 0 16 14"><path d="M8 2 L3.5 6.5 L8 11 M13 2 L8.5 6.5 L13 11" fill="none" stroke="#111" stroke-width="1.4" style="shape-rendering:geometricPrecision"/></svg>
<div class="r" style="left:3px;top:172px;width:200px;height:30px;background:#2274aa;"></div>
<div class="t" style="left:13px;top:182px;font-size:11px;color:#fff;">Miscellaneous</div>
<div class="t" style="left:13px;top:212px;font-size:11px;color:#000;">Payments</div>
<div class="t" style="left:13px;top:242px;font-size:11px;color:#000;">Times</div>
<div class="t" style="left:13px;top:272px;font-size:11px;color:#000;">Price info</div>
<div class="t" style="left:13px;top:302px;font-size:11px;color:#000;">Documents and Notes</div>
<div class="t" style="left:13px;top:332px;font-size:11px;color:#000;">own fields</div>
<div class="t" style="left:13px;top:362px;font-size:11px;color:#000;">File attachments</div>
<div class="r" style="left:1297px;top:154px;width:1px;height:682px;background:#9aa1aa;"></div>
<div class="r" style="left:1597px;top:154px;width:1px;height:718px;background:#c8c8c8;"></div>
<div class="r" style="left:1298px;top:871px;width:300px;height:1px;background:#c8c8c8;"></div>
<div class="r" style="left:1298px;top:154px;width:281px;height:682px;background:#d9d9d9;"></div>
<div class="r" style="left:1579px;top:154px;width:18px;height:682px;background:#f3f3f5;"></div>
<svg class="r" style="left:1583px;top:158px;" width="11" height="7" viewBox="0 0 11 7"><path d="M0.5 6 L5 1.5 L9.5 6 Z" fill="#7a7f88" style="shape-rendering:geometricPrecision"/></svg>
<svg class="r" style="left:1583px;top:825px;" width="11" height="7" viewBox="0 0 11 7"><path d="M0.5 1 L5 5.5 L9.5 1 Z" fill="#7a7f88" style="shape-rendering:geometricPrecision"/></svg>
<div class="r" style="left:1585px;top:171px;width:8px;height:374px;background:linear-gradient(90deg,#e4e5ea,#d8d9de);box-sizing:border-box;border:1px solid #9ea3ad;border-radius:4px"></div>
<div class="r" style="left:1298px;top:154px;width:281px;height:21px;background:#dcdcdc;"></div>
<div class="t" style="left:1318px;top:160px;font-size:11px;color:#222;font-weight:bold;letter-spacing:0.4px">Miscellaneous</div>
<svg class="r" style="left:1564px;top:161px;" width="11" height="7" viewBox="0 0 11 7"><path d="M1.5 6 L5 2.5 L8.5 6" fill="none" stroke="#808080" stroke-width="1.7" style="shape-rendering:geometricPrecision"/></svg>
<div class="r" style="left:1314px;top:175px;width:265px;height:248px;background:#c6c6c6;"></div>
<div class="r" style="left:1315px;top:176px;width:124px;height:18px;background:#efefef;"></div>
<div class="r" style="left:1440px;top:176px;width:139px;height:18px;background:#fff;"></div>
<div class="t" style="left:1332px;top:180px;font-size:11px;color:#0000ee;">Name</div>
<div class="t" style="left:1444px;top:180px;font-size:11px;color:#7a7a7a;">Invoice</div>
<div class="r" style="left:1315px;top:195px;width:124px;height:18px;background:#efefef;"></div>
<div class="r" style="left:1440px;top:195px;width:139px;height:18px;background:#fff;"></div>
<div class="t" style="left:1332px;top:199px;font-size:11px;color:#0000ee;">Number</div>
<div class="t" style="left:1444px;top:199px;font-size:11px;color:#7a7a7a;">IV202007/0022</div>
<div class="r" style="left:1315px;top:214px;width:124px;height:18px;background:#efefef;"></div>
<div class="r" style="left:1440px;top:214px;width:139px;height:18px;background:#fff;"></div>
<div class="t" style="left:1332px;top:218px;font-size:11px;color:#000;">Kommission</div>
<div class="t" style="left:1444px;top:218px;font-size:11px;color:#000;">VAT reduction</div>
<svg class="r" style="left:1566px;top:221px;" width="9" height="5" viewBox="0 0 9 5"><path d="M0 0 H8 L4 4 Z" fill="#111"/></svg>
<div class="r" style="left:1315px;top:233px;width:124px;height:18px;background:#efefef;"></div>
<div class="r" style="left:1440px;top:233px;width:139px;height:18px;background:#fff;"></div>
<div class="t" style="left:1332px;top:237px;font-size:11px;color:#000;">Printed on</div>
<div class="t" style="left:1444px;top:237px;font-size:11px;color:#000;">7/1/2020</div>
<svg class="r" style="left:1566px;top:240px;" width="9" height="5" viewBox="0 0 9 5"><path d="M0 0 H8 L4 4 Z" fill="#111"/></svg>
<div class="r" style="left:1315px;top:252px;width:124px;height:18px;background:#efefef;"></div>
<div class="r" style="left:1440px;top:252px;width:139px;height:18px;background:#fff;"></div>
<div class="t" style="left:1332px;top:256px;font-size:11px;color:#0000ee;">Contact</div>
<div class="t" style="left:1444px;top:256px;font-size:11px;color:#7a7a7a;">Doe, John</div>
<svg class="r" style="left:1565px;top:259px;" width="11" height="4" viewBox="0 0 11 4"><rect x="0" y="1" width="2" height="2" fill="#111"/><rect x="4" y="1" width="2" height="2" fill="#111"/><rect x="8" y="1" width="2" height="2" fill="#111"/></svg>
<div class="r" style="left:1315px;top:271px;width:124px;height:18px;background:#efefef;"></div>
<div class="r" style="left:1440px;top:271px;width:139px;height:18px;background:#fff;"></div>
<div class="t" style="left:1332px;top:275px;font-size:11px;color:#0000ee;">Project template</div>
<div class="t" style="left:1444px;top:275px;font-size:11px;color:#7a7a7a;">Invoice</div>
<svg class="r" style="left:1566px;top:278px;" width="9" height="5" viewBox="0 0 9 5"><path d="M0 0 H8 L4 4 Z" fill="#111"/></svg>
<div class="r" style="left:1315px;top:290px;width:124px;height:18px;background:#efefef;"></div>
<div class="r" style="left:1440px;top:290px;width:139px;height:18px;background:#fff;"></div>
<div class="t" style="left:1332px;top:294px;font-size:11px;color:#000;">Contact person</div>
<div class="t" style="left:1444px;top:294px;font-size:11px;color:#000;">Anton Admin</div>
<svg class="r" style="left:1566px;top:297px;" width="9" height="5" viewBox="0 0 9 5"><path d="M0 0 H8 L4 4 Z" fill="#111"/></svg>
<div class="r" style="left:1315px;top:309px;width:124px;height:18px;background:#efefef;"></div>
<div class="r" style="left:1440px;top:309px;width:139px;height:18px;background:#fff;"></div>
<div class="t" style="left:1332px;top:313px;font-size:11px;color:#000;">Representative</div>
<div class="t" style="left:1444px;top:313px;font-size:11px;color:#000;">Ronald Rich</div>
<svg class="r" style="left:1566px;top:316px;" width="9" height="5" viewBox="0 0 9 5"><path d="M0 0 H8 L4 4 Z" fill="#111"/></svg>
<div class="r" style="left:1315px;top:328px;width:124px;height:18px;background:#efefef;"></div>
<div class="r" style="left:1440px;top:328px;width:139px;height:18px;background:#fff;"></div>
<div class="t" style="left:1332px;top:332px;font-size:11px;color:#000;">Trip</div>
<div class="t" style="left:1444px;top:332px;font-size:11px;color:#000;">Wednesday</div>
<svg class="r" style="left:1566px;top:335px;" width="9" height="5" viewBox="0 0 9 5"><path d="M0 0 H8 L4 4 Z" fill="#111"/></svg>
<div class="r" style="left:1315px;top:347px;width:124px;height:18px;background:#efefef;"></div>
<div class="r" style="left:1440px;top:347px;width:139px;height:18px;background:#fff;"></div>
<div class="t" style="left:1332px;top:351px;font-size:11px;color:#000;">Service date</div>
<div class="t" style="left:1444px;top:351px;font-size:11px;color:#000;">7/1/2020</div>
<svg class="r" style="left:1566px;top:354px;" width="9" height="5" viewBox="0 0 9 5"><path d="M0 0 H8 L4 4 Z" fill="#111"/></svg>
<div class="r" style="left:1315px;top:366px;width:124px;height:18px;background:#efefef;"></div>
<div class="r" style="left:1440px;top:366px;width:139px;height:18px;background:#fff;"></div>
<div class="t" style="left:1332px;top:370px;font-size:11px;color:#000;">Project state</div>
<svg class="r" style="left:1566px;top:373px;" width="9" height="5" viewBox="0 0 9 5"><path d="M0 0 H8 L4 4 Z" fill="#111"/></svg>
<div class="r" style="left:1315px;top:385px;width:124px;height:18px;background:#efefef;"></div>
<div class="r" style="left:1440px;top:385px;width:139px;height:18px;background:#fff;"></div>
<div class="t" style="left:1332px;top:389px;font-size:11px;color:#000;">Project text</div>
<svg class="r" style="left:1566px;top:392px;" width="9" height="5" viewBox="0 0 9 5"><path d="M0 0 H8 L4 4 Z" fill="#111"/></svg>
<div class="r" style="left:1315px;top:404px;width:124px;height:18px;background:#efefef;"></div>
<div class="r" style="left:1440px;top:404px;width:139px;height:18px;background:#fff;"></div>
<div class="t" style="left:1332px;top:408px;font-size:11px;color:#000;">Notes</div>
<svg class="r" style="left:1566px;top:411px;" width="9" height="5" viewBox="0 0 9 5"><path d="M0 0 H8 L4 4 Z" fill="#111"/></svg>
<div class="r" style="left:1298px;top:422px;width:281px;height:21px;background:#dcdcdc;"></div>
<div class="t" style="left:1318px;top:428px;font-size:11px;color:#222;font-weight:bold;letter-spacing:0.4px">Addresses</div>
<svg class="r" style="left:1564px;top:429px;" width="11" height="7" viewBox="0 0 11 7"><path d="M1.5 6 L5 2.5 L8.5 6" fill="none" stroke="#808080" stroke-width="1.7" style="shape-rendering:geometricPrecision"/></svg>
<div class="r" style="left:1314px;top:443px;width:265px;height:210px;background:#c6c6c6;"></div>
<div class="r" style="left:1315px;top:444px;width:124px;height:18px;background:#efefef;"></div>
<div class="r" style="left:1440px;top:444px;width:139px;height:18px;background:#fff;"></div>
<div class="t" style="left:1332px;top:448px;font-size:11px;color:#0000ee;">Address</div>
<div class="t" style="left:1444px;top:448px;font-size:11px;color:#000;">Customer address</div>
<svg class="r" style="left:1566px;top:451px;" width="9" height="5" viewBox="0 0 9 5"><path d="M0 0 H8 L4 4 Z" fill="#111"/></svg>
<div class="r" style="left:1315px;top:463px;width:124px;height:18px;background:#efefef;"></div>
<div class="r" style="left:1440px;top:463px;width:139px;height:18px;background:#fff;"></div>
<div class="t" style="left:1332px;top:467px;font-size:11px;color:#000;">Name</div>
<div class="t" style="left:1444px;top:467px;font-size:11px;color:#000;">John Doe</div>
<div class="r" style="left:1315px;top:482px;width:124px;height:18px;background:#efefef;"></div>
<div class="r" style="left:1440px;top:482px;width:139px;height:18px;background:#fff;"></div>
<div class="t" style="left:1332px;top:486px;font-size:11px;color:#000;">Street</div>
<div class="t" style="left:1444px;top:486px;font-size:11px;color:#000;">123 Anywhere Street</div>
<div class="r" style="left:1315px;top:501px;width:124px;height:18px;background:#efefef;"></div>
<div class="r" style="left:1440px;top:501px;width:139px;height:18px;background:#fff;"></div>
<div class="t" style="left:1332px;top:505px;font-size:11px;color:#000;">unit</div>
<div class="r" style="left:1315px;top:520px;width:124px;height:18px;background:#efefef;"></div>
<div class="r" style="left:1440px;top:520px;width:139px;height:18px;background:#fff;"></div>
<div class="t" style="left:1332px;top:524px;font-size:11px;color:#000;">Zip</div>
<div class="t" style="left:1444px;top:524px;font-size:11px;color:#000;">12345</div>
<div class="r" style="left:1315px;top:539px;width:124px;height:18px;background:#efefef;"></div>
<div class="r" style="left:1440px;top:539px;width:139px;height:18px;background:#fff;"></div>
<div class="t" style="left:1332px;top:543px;font-size:11px;color:#000;">City</div>
<div class="t" style="left:1444px;top:543px;font-size:11px;color:#000;">Anytown</div>
<div class="r" style="left:1315px;top:558px;width:124px;height:18px;background:#efefef;"></div>
<div class="r" style="left:1440px;top:558px;width:139px;height:18px;background:#fff;"></div>
<div class="t" style="left:1332px;top:562px;font-size:11px;color:#000;">District</div>
<div class="r" style="left:1315px;top:577px;width:124px;height:18px;background:#efefef;"></div>
<div class="r" style="left:1440px;top:577px;width:139px;height:18px;background:#fff;"></div>
<div class="t" style="left:1332px;top:581px;font-size:11px;color:#000;">Country</div>
<div class="r" style="left:1315px;top:596px;width:124px;height:18px;background:#efefef;"></div>
<div class="r" style="left:1440px;top:596px;width:139px;height:18px;background:#fff;"></div>
<div class="t" style="left:1332px;top:600px;font-size:11px;color:#000;">Contact person</div>
<div class="r" style="left:1315px;top:615px;width:124px;height:18px;background:#efefef;"></div>
<div class="r" style="left:1440px;top:615px;width:139px;height:18px;background:#fff;"></div>
<div class="t" style="left:1332px;top:619px;font-size:11px;color:#000;">Phone number</div>
<div class="t" style="left:1444px;top:619px;font-size:11px;color:#000;">+00 123 456 987</div>
<svg class="r" style="left:1566px;top:622px;" width="9" height="5" viewBox="0 0 9 5"><path d="M0 0 H8 L4 4 Z" fill="#111"/></svg>
<div class="r" style="left:1315px;top:634px;width:124px;height:18px;background:#efefef;"></div>
<div class="r" style="left:1440px;top:634px;width:139px;height:18px;background:#fff;"></div>
<div class="t" style="left:1332px;top:638px;font-size:11px;color:#000;">E-Mail</div>
<div class="r" style="left:1298px;top:652px;width:281px;height:21px;background:#dcdcdc;"></div>
<div class="t" style="left:1318px;top:658px;font-size:11px;color:#222;font-weight:bold;letter-spacing:0.4px">Amounts</div>
<svg class="r" style="left:1564px;top:659px;" width="11" height="7" viewBox="0 0 11 7"><path d="M1.5 6 L5 2.5 L8.5 6" fill="none" stroke="#808080" stroke-width="1.7" style="shape-rendering:geometricPrecision"/></svg>
<div class="r" style="left:1314px;top:673px;width:265px;height:172px;background:#c6c6c6;"></div>
<div class="r" style="left:1315px;top:674px;width:124px;height:18px;background:#efefef;"></div>
<div class="r" style="left:1440px;top:674px;width:139px;height:18px;background:#fff;"></div>
<div class="t" style="left:1332px;top:678px;font-size:11px;color:#7a7a7a;">Purchase price</div>
<div class="t" style="right:24px;top:678px;font-size:11px;color:#7a7a7a;">&euro;0.00</div>
<div class="r" style="left:1315px;top:693px;width:124px;height:18px;background:#efefef;"></div>
<div class="r" style="left:1440px;top:693px;width:139px;height:18px;background:#fff;"></div>
<div class="t" style="left:1332px;top:697px;font-size:11px;color:#0000ee;">Net price</div>
<div class="t" style="right:24px;top:697px;font-size:11px;color:#7a7a7a;">&euro;100.00</div>
<div class="r" style="left:1315px;top:712px;width:124px;height:18px;background:#efefef;"></div>
<div class="r" style="left:1440px;top:712px;width:139px;height:18px;background:#fff;"></div>
<div class="t" style="left:1332px;top:716px;font-size:11px;color:#0000ee;">Gross price</div>
<div class="t" style="right:24px;top:716px;font-size:11px;color:#7a7a7a;">&euro;116.00</div>
<div class="r" style="left:1315px;top:731px;width:124px;height:18px;background:#efefef;"></div>
<div class="r" style="left:1440px;top:731px;width:139px;height:18px;background:#fff;"></div>
<div class="t" style="left:1332px;top:735px;font-size:11px;color:#0000ee;">VAT</div>
<div class="t" style="right:24px;top:735px;font-size:11px;color:#7a7a7a;">&euro;16.00</div>
<div class="r" style="left:1315px;top:750px;width:124px;height:18px;background:#efefef;"></div>
<div class="r" style="left:1440px;top:750px;width:139px;height:18px;background:#fff;"></div>
<div class="t" style="left:1347px;top:754px;font-size:11px;color:#7a7a7a;">VAT 16%</div>
<div class="t" style="right:24px;top:754px;font-size:11px;color:#7a7a7a;">&euro;16.00</div>
<div class="r" style="left:1315px;top:769px;width:124px;height:18px;background:#efefef;"></div>
<div class="r" style="left:1440px;top:769px;width:139px;height:18px;background:#fff;"></div>
<div class="t" style="left:1347px;top:773px;font-size:11px;color:#7a7a7a;">VAT 5%</div>
<div class="t" style="right:24px;top:773px;font-size:11px;color:#7a7a7a;">&euro;0.00</div>
<div class="r" style="left:1315px;top:788px;width:124px;height:18px;background:#efefef;"></div>
<div class="r" style="left:1440px;top:788px;width:139px;height:18px;background:#fff;"></div>
<div class="t" style="left:1332px;top:792px;font-size:11px;color:#7a7a7a;">Calculated time</div>
<div class="t" style="right:24px;top:792px;font-size:11px;color:#7a7a7a;">0 min</div>
<div class="r" style="left:1315px;top:807px;width:124px;height:18px;background:#efefef;"></div>
<div class="r" style="left:1440px;top:807px;width:139px;height:18px;background:#fff;"></div>
<div class="t" style="left:1332px;top:811px;font-size:11px;color:#7a7a7a;">Commission</div>
<div class="t" style="right:24px;top:811px;font-size:11px;color:#7a7a7a;">&euro;0.00</div>
<div class="r" style="left:1315px;top:826px;width:124px;height:18px;background:#efefef;"></div>
<div class="r" style="left:1440px;top:826px;width:139px;height:18px;background:#fff;"></div>
<div class="t" style="left:1332px;top:830px;font-size:11px;color:#000;">Use SP2</div>
<div class="r" style="left:1503px;top:829px;width:13px;height:13px;background:#fff;box-sizing:border-box;border:1px solid #9a9a9a"></div>
<svg class="r" style="left:1317px;top:738px;" width="9" height="5" viewBox="0 0 9 5"><path d="M0 0 H7 L3.5 3.5 Z" fill="#8a8a8a"/></svg>
<div class="r" style="left:1298px;top:836px;width:299px;height:35px;background:#f7f7f7;"></div>
<div class="t" style="left:226px;top:850px;font-size:11px;color:#000;">created</div>
<div class="r" style="left:337px;top:845px;width:175px;height:21px;background:transparent;box-sizing:border-box;border:1px solid #7d7d7d"></div>
<div class="t" style="left:340px;top:850px;font-size:11px;color:#000;">1/11/2021 5:55:07 AM - admin</div>
<div class="t" style="left:613px;top:850px;font-size:11px;color:#000;">Modified</div>
<div class="r" style="left:684px;top:845px;width:175px;height:21px;background:transparent;box-sizing:border-box;border:1px solid #7d7d7d"></div>
<div class="t" style="left:687px;top:850px;font-size:11px;color:#000;">1/11/2021 5:55:07 AM - admin</div>
<div class="r" style="left:2px;top:871px;width:106px;height:1px;background:#c8c8c8;"></div>
<div class="r" style="left:244px;top:871px;width:1356px;height:1px;background:#c8c8c8;"></div>
<div class="r" style="left:108px;top:871px;width:1px;height:29px;background:#c8c8c8;"></div>
<div class="r" style="left:243px;top:871px;width:1px;height:27px;background:#c8c8c8;"></div>
<div class="r" style="left:108px;top:871px;width:136px;height:1px;background:#c8c8c8;"></div>
<div class="t" style="left:13px;top:879px;font-size:11px;color:#444;">Projects [2 / 343]</div>
<div class="t" style="left:119px;top:879px;font-size:11px;color:#1e73be;">Invoice IV202101/0022</div>
<div class="r" style="left:108px;top:895px;width:136px;height:2px;background:#1e73be;"></div>
<svg class="r" style="left:1584px;top:883px;" width="9" height="5" viewBox="0 0 9 5"><path d="M0 0 H8 L4 4 Z" fill="#666"/></svg>
<div class="r" style="left:229px;top:180px;width:1050px;height:656px;background:#d9d9d9;"></div>
<div class="r" style="left:357px;top:180px;width:795px;height:656px;background:#fff;"></div>
<div class="r" style="left:355px;top:180px;width:2px;height:656px;background:linear-gradient(90deg,#d4d4d4,#c6c6c6);"></div>
<div class="r" style="left:357px;top:180px;width:1px;height:656px;background:#000;"></div>
<div class="r" style="left:1152px;top:180px;width:9px;height:656px;background:linear-gradient(90deg,#000 0%,#444 25%,#8c8c8c 55%,#c8c8c8 85%,#d9d9d9 100%);"></div>
<div class="r" style="left:1279px;top:180px;width:18px;height:656px;background:#efefef;"></div>
<div class="r" style="left:1279px;top:180px;width:1px;height:656px;background:#fff;"></div>
<div class="r" style="left:1280px;top:280px;width:15px;height:339px;background:#cbcbcb;"></div>
<svg class="r" style="left:1281px;top:184px;" width="12" height="9" viewBox="0 0 12 9"><path d="M2 7 L6 3 L10 7" fill="none" stroke="#555" stroke-width="2" style="shape-rendering:geometricPrecision"/></svg>
<svg class="r" style="left:1281px;top:821px;" width="12" height="9" viewBox="0 0 12 9"><path d="M2 2 L6 6 L10 2" fill="none" stroke="#555" stroke-width="2" style="shape-rendering:geometricPrecision"/></svg>
<div class="r" style="left:204px;top:154px;width:1093px;height:4px;background:#f7f7f7;"></div>
<div class="r" style="left:204px;top:836px;width:1093px;height:1px;background:#ececec;"></div>
<div class="r" style="left:205px;top:158px;width:14px;height:14px;background:#fff;box-sizing:border-box;border:1px solid #a8a8a8"></div>
<svg class="r" style="left:211px;top:162px;" width="7" height="7" viewBox="0 0 7 7"><path d="M0 0 H2 V4 H6 V6 H0 Z" fill="#000"/></svg>
<div class="r" style="left:358px;top:158px;width:794px;height:15px;background:#fdfdfd;"></div>
<div class="r" style="left:358px;top:158px;width:76px;height:15px;background:#f3f3f3;"></div>
<div class="r" style="left:1077px;top:158px;width:75px;height:15px;background:#f3f3f3;"></div>
<div class="r" style="left:229px;top:179px;width:1050px;height:1px;background:#d2d2d2;"></div>
<svg class="r" style="left:358px;top:158px;" width="794" height="15" viewBox="0 0 794 15"><rect x="0" y="4" width="1" height="8" fill="#555"/><rect x="5" y="10" width="1" height="2" fill="#555"/><rect x="10" y="10" width="1" height="2" fill="#555"/><rect x="15" y="10" width="1" height="2" fill="#555"/><rect x="19" y="8" width="1" height="4" fill="#555"/><rect x="24" y="10" width="1" height="2" fill="#555"/><rect x="29" y="10" width="1" height="2" fill="#555"/><rect x="33" y="10" width="1" height="2" fill="#555"/><rect x="38" y="4" width="1" height="8" fill="#555"/><rect x="43" y="10" width="1" height="2" fill="#555"/><rect x="48" y="10" width="1" height="2" fill="#555"/><rect x="52" y="10" width="1" height="2" fill="#555"/><rect x="57" y="8" width="1" height="4" fill="#555"/><rect x="62" y="10" width="1" height="2" fill="#555"/><rect x="67" y="10" width="1" height="2" fill="#555"/><rect x="71" y="10" width="1" height="2" fill="#555"/><rect x="76" y="4" width="1" height="8" fill="#555"/><rect x="81" y="10" width="1" height="2" fill="#555"/><rect x="85" y="10" width="1" height="2" fill="#555"/><rect x="90" y="10" width="1" height="2" fill="#555"/><rect x="95" y="8" width="1" height="4" fill="#555"/><rect x="100" y="10" width="1" height="2" fill="#555"/><rect x="104" y="10" width="1" height="2" fill="#555"/><rect x="109" y="10" width="1" height="2" fill="#555"/><rect x="114" y="4" width="1" height="8" fill="#555"/><rect x="119" y="10" width="1" height="2" fill="#555"/><rect x="123" y="10" width="1" height="2" fill="#555"/><rect x="128" y="10" width="1" height="2" fill="#555"/><rect x="133" y="8" width="1" height="4" fill="#555"/><rect x="137" y="10" width="1" height="2" fill="#555"/><rect x="142" y="10" width="1" height="2" fill="#555"/><rect x="147" y="10" width="1" height="2" fill="#555"/><rect x="152" y="4" width="1" height="8" fill="#555"/><rect x="156" y="10" width="1" height="2" fill="#555"/><rect x="161" y="10" width="1" height="2" fill="#555"/><rect x="166" y="10" width="1" height="2" fill="#555"/><rect x="170" y="8" width="1" height="4" fill="#555"/><rect x="175" y="10" width="1" height="2" fill="#555"/><rect x="180" y="10" width="1" height="2" fill="#555"/><rect x="185" y="10" width="1" height="2" fill="#555"/><rect x="189" y="4" width="1" height="8" fill="#555"/><rect x="194" y="10" width="1" height="2" fill="#555"/><rect x="199" y="10" width="1" height="2" fill="#555"/><rect x="204" y="10" width="1" height="2" fill="#555"/><rect x="208" y="8" width="1" height="4" fill="#555"/><rect x="213" y="10" width="1" height="2" fill="#555"/><rect x="218" y="10" width="1" height="2" fill="#555"/><rect x="222" y="10" width="1" height="2" fill="#555"/><rect x="227" y="4" width="1" height="8" fill="#555"/><rect x="232" y="10" width="1" height="2" fill="#555"/><rect x="237" y="10" width="1" height="2" fill="#555"/><rect x="241" y="10" width="1" height="2" fill="#555"/><rect x="246" y="8" width="1" height="4" fill="#555"/><rect x="251" y="10" width="1" height="2" fill="#555"/><rect x="256" y="10" width="1" height="2" fill="#555"/><rect x="260" y="10" width="1" height="2" fill="#555"/><rect x="265" y="4" width="1" height="8" fill="#555"/><rect x="270" y="10" width="1" height="2" fill="#555"/><rect x="274" y="10" width="1" height="2" fill="#555"/><rect x="279" y="10" width="1" height="2" fill="#555"/><rect x="284" y="8" width="1" height="4" fill="#555"/><rect x="289" y="10" width="1" height="2" fill="#555"/><rect x="293" y="10" width="1" height="2" fill="#555"/><rect x="298" y="10" width="1" height="2" fill="#555"/><rect x="303" y="4" width="1" height="8" fill="#555"/><rect x="308" y="10" width="1" height="2" fill="#555"/><rect x="312" y="10" width="1" height="2" fill="#555"/><rect x="317" y="10" width="1" height="2" fill="#555"/><rect x="322" y="8" width="1" height="4" fill="#555"/><rect x="326" y="10" width="1" height="2" fill="#555"/><rect x="331" y="10" width="1" height="2" fill="#555"/><rect x="336" y="10" width="1" height="2" fill="#555"/><rect x="341" y="4" width="1" height="8" fill="#555"/><rect x="345" y="10" width="1" height="2" fill="#555"/><rect x="350" y="10" width="1" height="2" fill="#555"/><rect x="355" y="10" width="1" height="2" fill="#555"/><rect x="360" y="8" width="1" height="4" fill="#555"/><rect x="364" y="10" width="1" height="2" fill="#555"/><rect x="369" y="10" width="1" height="2" fill="#555"/><rect x="374" y="10" width="1" height="2" fill="#555"/><rect x="378" y="4" width="1" height="8" fill="#555"/><rect x="383" y="10" width="1" height="2" fill="#555"/><rect x="388" y="10" width="1" height="2" fill="#555"/><rect x="393" y="10" width="1" height="2" fill="#555"/><rect x="397" y="8" width="1" height="4" fill="#555"/><rect x="402" y="10" width="1" height="2" fill="#555"/><rect x="407" y="10" width="1" height="2" fill="#555"/><rect x="411" y="10" width="1" height="2" fill="#555"/><rect x="416" y="4" width="1" height="8" fill="#555"/><rect x="421" y="10" width="1" height="2" fill="#555"/><rect x="426" y="10" width="1" height="2" fill="#555"/><rect x="430" y="10" width="1" height="2" fill="#555"/><rect x="435" y="8" width="1" height="4" fill="#555"/><rect x="440" y="10" width="1" height="2" fill="#555"/><rect x="445" y="10" width="1" height="2" fill="#555"/><rect x="449" y="10" width="1" height="2" fill="#555"/><rect x="454" y="4" width="1" height="8" fill="#555"/><rect x="459" y="10" width="1" height="2" fill="#555"/><rect x="463" y="10" width="1" height="2" fill="#555"/><rect x="468" y="10" width="1" height="2" fill="#555"/><rect x="473" y="8" width="1" height="4" fill="#555"/><rect x="478" y="10" width="1" height="2" fill="#555"/><rect x="482" y="10" width="1" height="2" fill="#555"/><rect x="487" y="10" width="1" height="2" fill="#555"/><rect x="492" y="4" width="1" height="8" fill="#555"/><rect x="497" y="10" width="1" height="2" fill="#555"/><rect x="501" y="10" width="1" height="2" fill="#555"/><rect x="506" y="10" width="1" height="2" fill="#555"/><rect x="511" y="8" width="1" height="4" fill="#555"/><rect x="515" y="10" width="1" height="2" fill="#555"/><rect x="520" y="10" width="1" height="2" fill="#555"/><rect x="525" y="10" width="1" height="2" fill="#555"/><rect x="530" y="4" width="1" height="8" fill="#555"/><rect x="534" y="10" width="1" height="2" fill="#555"/><rect x="539" y="10" width="1" height="2" fill="#555"/><rect x="544" y="10" width="1" height="2" fill="#555"/><rect x="548" y="8" width="1" height="4" fill="#555"/><rect x="553" y="10" width="1" height="2" fill="#555"/><rect x="558" y="10" width="1" height="2" fill="#555"/><rect x="563" y="10" width="1" height="2" fill="#555"/><rect x="567" y="4" width="1" height="8" fill="#555"/><rect x="572" y="10" width="1" height="2" fill="#555"/><rect x="577" y="10" width="1" height="2" fill="#555"/><rect x="582" y="10" width="1" height="2" fill="#555"/><rect x="586" y="8" width="1" height="4" fill="#555"/><rect x="591" y="10" width="1" height="2" fill="#555"/><rect x="596" y="10" width="1" height="2" fill="#555"/><rect x="600" y="10" width="1" height="2" fill="#555"/><rect x="605" y="4" width="1" height="8" fill="#555"/><rect x="610" y="10" width="1" height="2" fill="#555"/><rect x="615" y="10" width="1" height="2" fill="#555"/><rect x="619" y="10" width="1" height="2" fill="#555"/><rect x="624" y="8" width="1" height="4" fill="#555"/><rect x="629" y="10" width="1" height="2" fill="#555"/><rect x="634" y="10" width="1" height="2" fill="#555"/><rect x="638" y="10" width="1" height="2" fill="#555"/><rect x="643" y="4" width="1" height="8" fill="#555"/><rect x="648" y="10" width="1" height="2" fill="#555"/><rect x="652" y="10" width="1" height="2" fill="#555"/><rect x="657" y="10" width="1" height="2" fill="#555"/><rect x="662" y="8" width="1" height="4" fill="#555"/><rect x="667" y="10" width="1" height="2" fill="#555"/><rect x="671" y="10" width="1" height="2" fill="#555"/><rect x="676" y="10" width="1" height="2" fill="#555"/><rect x="681" y="4" width="1" height="8" fill="#555"/><rect x="686" y="10" width="1" height="2" fill="#555"/><rect x="690" y="10" width="1" height="2" fill="#555"/><rect x="695" y="10" width="1" height="2" fill="#555"/><rect x="700" y="8" width="1" height="4" fill="#555"/><rect x="704" y="10" width="1" height="2" fill="#555"/><rect x="709" y="10" width="1" height="2" fill="#555"/><rect x="714" y="10" width="1" height="2" fill="#555"/><rect x="719" y="4" width="1" height="8" fill="#555"/><rect x="723" y="10" width="1" height="2" fill="#555"/><rect x="728" y="10" width="1" height="2" fill="#555"/><rect x="733" y="10" width="1" height="2" fill="#555"/><rect x="738" y="8" width="1" height="4" fill="#555"/><rect x="742" y="10" width="1" height="2" fill="#555"/><rect x="747" y="10" width="1" height="2" fill="#555"/><rect x="752" y="10" width="1" height="2" fill="#555"/><rect x="756" y="4" width="1" height="8" fill="#555"/><rect x="761" y="10" width="1" height="2" fill="#555"/><rect x="766" y="10" width="1" height="2" fill="#555"/><rect x="771" y="10" width="1" height="2" fill="#555"/><rect x="775" y="8" width="1" height="4" fill="#555"/><rect x="780" y="10" width="1" height="2" fill="#555"/><rect x="785" y="10" width="1" height="2" fill="#555"/><rect x="789" y="10" width="1" height="2" fill="#555"/></svg>
<div class="t" style="left:359px;top:159px;font-size:9px;color:#555;">2</div>
<div class="t" style="left:397px;top:159px;font-size:9px;color:#555;">1</div>
<div class="t" style="left:473px;top:159px;font-size:9px;color:#555;">1</div>
<div class="t" style="left:511px;top:159px;font-size:9px;color:#555;">2</div>
<div class="t" style="left:548px;top:159px;font-size:9px;color:#555;">3</div>
<div class="t" style="left:586px;top:159px;font-size:9px;color:#555;">4</div>
<div class="t" style="left:624px;top:159px;font-size:9px;color:#555;">5</div>
<div class="t" style="left:662px;top:159px;font-size:9px;color:#555;">6</div>
<div class="t" style="left:700px;top:159px;font-size:9px;color:#555;">7</div>
<div class="t" style="left:737px;top:159px;font-size:9px;color:#555;">8</div>
<div class="t" style="left:775px;top:159px;font-size:9px;color:#555;">9</div>
<div class="t" style="left:813px;top:159px;font-size:9px;color:#555;">10</div>
<div class="t" style="left:851px;top:159px;font-size:9px;color:#555;">11</div>
<div class="t" style="left:889px;top:159px;font-size:9px;color:#555;">12</div>
<div class="t" style="left:926px;top:159px;font-size:9px;color:#555;">13</div>
<div class="t" style="left:964px;top:159px;font-size:9px;color:#555;">14</div>
<div class="t" style="left:1002px;top:159px;font-size:9px;color:#555;">15</div>
<div class="t" style="left:1040px;top:159px;font-size:9px;color:#555;">16</div>
<div class="t" style="left:1078px;top:159px;font-size:9px;color:#555;">17</div>
<div class="t" style="left:1115px;top:159px;font-size:9px;color:#555;">18</div>
<svg class="r" style="left:509px;top:171px;" width="6" height="6" viewBox="0 0 6 6"><path d="M0 0 H2 V3 H5 V5 H0 Z" fill="#444"/></svg>
<svg class="r" style="left:584px;top:171px;" width="6" height="6" viewBox="0 0 6 6"><path d="M0 0 H2 V3 H5 V5 H0 Z" fill="#444"/></svg>
<svg class="r" style="left:660px;top:171px;" width="6" height="6" viewBox="0 0 6 6"><path d="M0 0 H2 V3 H5 V5 H0 Z" fill="#444"/></svg>
<svg class="r" style="left:735px;top:171px;" width="6" height="6" viewBox="0 0 6 6"><path d="M0 0 H2 V3 H5 V5 H0 Z" fill="#444"/></svg>
<svg class="r" style="left:811px;top:171px;" width="6" height="6" viewBox="0 0 6 6"><path d="M0 0 H2 V3 H5 V5 H0 Z" fill="#444"/></svg>
<svg class="r" style="left:887px;top:171px;" width="6" height="6" viewBox="0 0 6 6"><path d="M0 0 H2 V3 H5 V5 H0 Z" fill="#444"/></svg>
<svg class="r" style="left:962px;top:171px;" width="6" height="6" viewBox="0 0 6 6"><path d="M0 0 H2 V3 H5 V5 H0 Z" fill="#444"/></svg>
<svg class="r" style="left:1038px;top:171px;" width="6" height="6" viewBox="0 0 6 6"><path d="M0 0 H2 V3 H5 V5 H0 Z" fill="#444"/></svg>
<svg class="r" style="left:429px;top:159px;" width="12" height="20" viewBox="0 0 12 20"><path d="M5 1 L10 7 L5 11 Z" fill="#555" style="shape-rendering:geometricPrecision"/><rect x="4" y="1" width="2" height="12" fill="#555"/><path d="M0 16.5 H8 M5 13.5 L8 16.5 L5 19.5" fill="none" stroke="#444" stroke-width="1.6" style="shape-rendering:geometricPrecision"/><rect x="9" y="13" width="1.5" height="7" fill="#444"/></svg>
<svg class="r" style="left:1068px;top:159px;" width="20" height="20" viewBox="0 0 20 20"><path d="M10 1 L3 7 L10 12 Z" fill="#555" style="shape-rendering:geometricPrecision"/><rect x="8" y="14" width="1.5" height="6" fill="#444"/><path d="M10 16.5 H18 M13 13.5 L10 16.5 L13 19.5" fill="none" stroke="#444" stroke-width="1.6" style="shape-rendering:geometricPrecision"/></svg>
<div class="r" style="left:208px;top:180px;width:15px;height:656px;background:#fdfdfd;"></div>
<div class="r" style="left:208px;top:180px;width:15px;height:87px;background:#f3f3f3;"></div>
<svg class="r" style="left:208px;top:180px;" width="15" height="656" viewBox="0 0 15 656"><rect x="10" y="2" width="2" height="1" fill="#555"/><rect x="10" y="7" width="2" height="1" fill="#555"/><rect x="4" y="12" width="8" height="1" fill="#555"/><rect x="10" y="16" width="2" height="1" fill="#555"/><rect x="10" y="21" width="2" height="1" fill="#555"/><rect x="10" y="26" width="2" height="1" fill="#555"/><rect x="8" y="31" width="4" height="1" fill="#555"/><rect x="10" y="35" width="2" height="1" fill="#555"/><rect x="10" y="40" width="2" height="1" fill="#555"/><rect x="10" y="45" width="2" height="1" fill="#555"/><rect x="4" y="50" width="8" height="1" fill="#555"/><rect x="10" y="54" width="2" height="1" fill="#555"/><rect x="10" y="59" width="2" height="1" fill="#555"/><rect x="10" y="64" width="2" height="1" fill="#555"/><rect x="8" y="68" width="4" height="1" fill="#555"/><rect x="10" y="73" width="2" height="1" fill="#555"/><rect x="10" y="78" width="2" height="1" fill="#555"/><rect x="10" y="83" width="2" height="1" fill="#555"/><rect x="4" y="87" width="8" height="1" fill="#555"/><rect x="10" y="92" width="2" height="1" fill="#555"/><rect x="10" y="97" width="2" height="1" fill="#555"/><rect x="10" y="101" width="2" height="1" fill="#555"/><rect x="8" y="106" width="4" height="1" fill="#555"/><rect x="10" y="111" width="2" height="1" fill="#555"/><rect x="10" y="116" width="2" height="1" fill="#555"/><rect x="10" y="120" width="2" height="1" fill="#555"/><rect x="4" y="125" width="8" height="1" fill="#555"/><rect x="10" y="130" width="2" height="1" fill="#555"/><rect x="10" y="135" width="2" height="1" fill="#555"/><rect x="10" y="139" width="2" height="1" fill="#555"/><rect x="8" y="144" width="4" height="1" fill="#555"/><rect x="10" y="149" width="2" height="1" fill="#555"/><rect x="10" y="153" width="2" height="1" fill="#555"/><rect x="10" y="158" width="2" height="1" fill="#555"/><rect x="4" y="163" width="8" height="1" fill="#555"/><rect x="10" y="168" width="2" height="1" fill="#555"/><rect x="10" y="172" width="2" height="1" fill="#555"/><rect x="10" y="177" width="2" height="1" fill="#555"/><rect x="8" y="182" width="4" height="1" fill="#555"/><rect x="10" y="187" width="2" height="1" fill="#555"/><rect x="10" y="191" width="2" height="1" fill="#555"/><rect x="10" y="196" width="2" height="1" fill="#555"/><rect x="4" y="201" width="8" height="1" fill="#555"/><rect x="10" y="205" width="2" height="1" fill="#555"/><rect x="10" y="210" width="2" height="1" fill="#555"/><rect x="10" y="215" width="2" height="1" fill="#555"/><rect x="8" y="220" width="4" height="1" fill="#555"/><rect x="10" y="224" width="2" height="1" fill="#555"/><rect x="10" y="229" width="2" height="1" fill="#555"/><rect x="10" y="234" width="2" height="1" fill="#555"/><rect x="4" y="238" width="8" height="1" fill="#555"/><rect x="10" y="243" width="2" height="1" fill="#555"/><rect x="10" y="248" width="2" height="1" fill="#555"/><rect x="10" y="253" width="2" height="1" fill="#555"/><rect x="8" y="257" width="4" height="1" fill="#555"/><rect x="10" y="262" width="2" height="1" fill="#555"/><rect x="10" y="267" width="2" height="1" fill="#555"/><rect x="10" y="272" width="2" height="1" fill="#555"/><rect x="4" y="276" width="8" height="1" fill="#555"/><rect x="10" y="281" width="2" height="1" fill="#555"/><rect x="10" y="286" width="2" height="1" fill="#555"/><rect x="10" y="290" width="2" height="1" fill="#555"/><rect x="8" y="295" width="4" height="1" fill="#555"/><rect x="10" y="300" width="2" height="1" fill="#555"/><rect x="10" y="305" width="2" height="1" fill="#555"/><rect x="10" y="309" width="2" height="1" fill="#555"/><rect x="4" y="314" width="8" height="1" fill="#555"/><rect x="10" y="319" width="2" height="1" fill="#555"/><rect x="10" y="324" width="2" height="1" fill="#555"/><rect x="10" y="328" width="2" height="1" fill="#555"/><rect x="8" y="333" width="4" height="1" fill="#555"/><rect x="10" y="338" width="2" height="1" fill="#555"/><rect x="10" y="342" width="2" height="1" fill="#555"/><rect x="10" y="347" width="2" height="1" fill="#555"/><rect x="4" y="352" width="8" height="1" fill="#555"/><rect x="10" y="357" width="2" height="1" fill="#555"/><rect x="10" y="361" width="2" height="1" fill="#555"/><rect x="10" y="366" width="2" height="1" fill="#555"/><rect x="8" y="371" width="4" height="1" fill="#555"/><rect x="10" y="376" width="2" height="1" fill="#555"/><rect x="10" y="380" width="2" height="1" fill="#555"/><rect x="10" y="385" width="2" height="1" fill="#555"/><rect x="4" y="390" width="8" height="1" fill="#555"/><rect x="10" y="394" width="2" height="1" fill="#555"/><rect x="10" y="399" width="2" height="1" fill="#555"/><rect x="10" y="404" width="2" height="1" fill="#555"/><rect x="8" y="409" width="4" height="1" fill="#555"/><rect x="10" y="413" width="2" height="1" fill="#555"/><rect x="10" y="418" width="2" height="1" fill="#555"/><rect x="10" y="423" width="2" height="1" fill="#555"/><rect x="4" y="428" width="8" height="1" fill="#555"/><rect x="10" y="432" width="2" height="1" fill="#555"/><rect x="10" y="437" width="2" height="1" fill="#555"/><rect x="10" y="442" width="2" height="1" fill="#555"/><rect x="8" y="446" width="4" height="1" fill="#555"/><rect x="10" y="451" width="2" height="1" fill="#555"/><rect x="10" y="456" width="2" height="1" fill="#555"/><rect x="10" y="461" width="2" height="1" fill="#555"/><rect x="4" y="465" width="8" height="1" fill="#555"/><rect x="10" y="470" width="2" height="1" fill="#555"/><rect x="10" y="475" width="2" height="1" fill="#555"/><rect x="10" y="479" width="2" height="1" fill="#555"/><rect x="8" y="484" width="4" height="1" fill="#555"/><rect x="10" y="489" width="2" height="1" fill="#555"/><rect x="10" y="494" width="2" height="1" fill="#555"/><rect x="10" y="498" width="2" height="1" fill="#555"/><rect x="4" y="503" width="8" height="1" fill="#555"/><rect x="10" y="508" width="2" height="1" fill="#555"/><rect x="10" y="513" width="2" height="1" fill="#555"/><rect x="10" y="517" width="2" height="1" fill="#555"/><rect x="8" y="522" width="4" height="1" fill="#555"/><rect x="10" y="527" width="2" height="1" fill="#555"/><rect x="10" y="531" width="2" height="1" fill="#555"/><rect x="10" y="536" width="2" height="1" fill="#555"/><rect x="4" y="541" width="8" height="1" fill="#555"/><rect x="10" y="546" width="2" height="1" fill="#555"/><rect x="10" y="550" width="2" height="1" fill="#555"/><rect x="10" y="555" width="2" height="1" fill="#555"/><rect x="8" y="560" width="4" height="1" fill="#555"/><rect x="10" y="565" width="2" height="1" fill="#555"/><rect x="10" y="569" width="2" height="1" fill="#555"/><rect x="10" y="574" width="2" height="1" fill="#555"/><rect x="4" y="579" width="8" height="1" fill="#555"/><rect x="10" y="583" width="2" height="1" fill="#555"/><rect x="10" y="588" width="2" height="1" fill="#555"/><rect x="10" y="593" width="2" height="1" fill="#555"/><rect x="8" y="598" width="4" height="1" fill="#555"/><rect x="10" y="602" width="2" height="1" fill="#555"/><rect x="10" y="607" width="2" height="1" fill="#555"/><rect x="10" y="612" width="2" height="1" fill="#555"/><rect x="4" y="616" width="8" height="1" fill="#555"/><rect x="10" y="621" width="2" height="1" fill="#555"/><rect x="10" y="626" width="2" height="1" fill="#555"/><rect x="10" y="631" width="2" height="1" fill="#555"/><rect x="8" y="635" width="4" height="1" fill="#555"/><rect x="10" y="640" width="2" height="1" fill="#555"/><rect x="10" y="645" width="2" height="1" fill="#555"/><rect x="10" y="650" width="2" height="1" fill="#555"/><rect x="4" y="654" width="8" height="1" fill="#555"/></svg>
<div class="t" style="left:209px;top:199px;font-size:9px;color:#555;transform:rotate(-90deg);transform-origin:0 0;">2</div>
<div class="t" style="left:209px;top:237px;font-size:9px;color:#555;transform:rotate(-90deg);transform-origin:0 0;">1</div>
<div class="t" style="left:209px;top:312px;font-size:9px;color:#555;transform:rotate(-90deg);transform-origin:0 0;">1</div>
<div class="t" style="left:209px;top:350px;font-size:9px;color:#555;transform:rotate(-90deg);transform-origin:0 0;">2</div>
<div class="t" style="left:209px;top:388px;font-size:9px;color:#555;transform:rotate(-90deg);transform-origin:0 0;">3</div>
<div class="t" style="left:209px;top:425px;font-size:9px;color:#555;transform:rotate(-90deg);transform-origin:0 0;">4</div>
<div class="t" style="left:209px;top:463px;font-size:9px;color:#555;transform:rotate(-90deg);transform-origin:0 0;">5</div>
<div class="t" style="left:209px;top:501px;font-size:9px;color:#555;transform:rotate(-90deg);transform-origin:0 0;">6</div>
<div class="t" style="left:209px;top:539px;font-size:9px;color:#555;transform:rotate(-90deg);transform-origin:0 0;">7</div>
<div class="t" style="left:209px;top:577px;font-size:9px;color:#555;transform:rotate(-90deg);transform-origin:0 0;">8</div>
<div class="t" style="left:209px;top:615px;font-size:9px;color:#555;transform:rotate(-90deg);transform-origin:0 0;">9</div>
<div class="t" style="left:209px;top:657px;font-size:9px;color:#555;transform:rotate(-90deg);transform-origin:0 0;">10</div>
<div class="t" style="left:209px;top:695px;font-size:9px;color:#555;transform:rotate(-90deg);transform-origin:0 0;">11</div>
<div class="t" style="left:209px;top:733px;font-size:9px;color:#555;transform:rotate(-90deg);transform-origin:0 0;">12</div>
<div class="t" style="left:209px;top:771px;font-size:9px;color:#555;transform:rotate(-90deg);transform-origin:0 0;">13</div>
<div class="t" style="left:209px;top:808px;font-size:9px;color:#555;transform:rotate(-90deg);transform-origin:0 0;">14</div>
<svg class="r" style="left:222px;top:257px;" width="9" height="12" viewBox="0 0 9 12"><rect x="3.5" y="1" width="1.5" height="9" fill="#555"/><path d="M1.3 6.5 L4.25 10 L7.2 6.5" fill="none" stroke="#555" stroke-width="1.4" style="shape-rendering:geometricPrecision"/><rect x="1" y="10" width="7" height="1.5" fill="#555"/></svg>
<div class="t" style="left:433px;top:269px;font-size:9.3px;color:#000;letter-spacing:0px;top:270px">Sample Company &middot; Sample street 1245 &middot; 12345 Sample town</div>
<div class="t" style="left:434px;top:281px;font-size:12px;color:#000;letter-spacing:0.12px;">John Doe</div>
<div class="t" style="left:434px;top:295px;font-size:12px;color:#000;letter-spacing:0.12px;">127 Anywhere Street</div>
<div class="t" style="left:434px;top:309px;font-size:12px;color:#000;letter-spacing:0.12px;">12345 Anytown</div>
<div class="t" style="left:434px;top:351px;font-size:12px;color:#000;letter-spacing:0.12px;">Delivery address:</div>
<div class="t" style="left:434px;top:365px;font-size:12px;color:#000;letter-spacing:0.12px;">John Doe</div>
<div class="t" style="left:434px;top:379px;font-size:12px;color:#000;letter-spacing:0.12px;">125 Anywhere Street</div>
<div class="t" style="left:434px;top:393px;font-size:12px;color:#000;letter-spacing:0.12px;">12345 Anytown</div>
<div class="t" style="left:434px;top:436px;font-size:13px;color:#000;font-weight:bold;letter-spacing:0.25px;">Invoice IV202007/0022</div>
<div class="t" style="left:435px;top:468px;font-size:13px;color:#000;font-weight:bold;letter-spacing:0.25px;">Subject:</div>
<div class="t" style="left:434px;top:498px;font-size:12px;color:#000;letter-spacing:0.12px;">Dear Mr. Doe</div>
<div class="t" style="left:434px;top:527px;font-size:12px;color:#000;letter-spacing:0.12px;">we invoice the following items and services:</div>
<div class="r" style="left:816px;top:285px;width:262px;height:201px;background:transparent;box-sizing:border-box;border:1px solid #c4c4c4"></div>
<div class="r" style="left:816px;top:285px;width:260px;height:171px;background:#fff;box-sizing:border-box;border:1px solid #000"></div>
<div class="t" style="left:818px;top:286px;font-size:12px;color:#000;letter-spacing:0.12px;">Customer No.</div>
<div class="t" style="left:913px;top:286px;font-size:12px;color:#000;letter-spacing:0.12px;">10000</div>
<div class="t" style="left:818px;top:300px;font-size:12px;color:#000;letter-spacing:0.12px;">Project</div>
<div class="t" style="left:913px;top:300px;font-size:12px;color:#000;letter-spacing:0.12px;">VAT reduction</div>
<div class="t" style="left:818px;top:314px;font-size:12px;color:#000;letter-spacing:0.12px;">Order No.</div>
<div class="t" style="left:913px;top:314px;font-size:12px;color:#000;letter-spacing:0.12px;">O202006/0076</div>
<div class="t" style="left:818px;top:328px;font-size:12px;color:#000;letter-spacing:0.12px;">Delivery from</div>
<div class="t" style="left:818px;top:342px;font-size:12px;color:#000;letter-spacing:0.12px;">Your subject</div>
<div class="t" style="left:818px;top:371px;font-size:12px;color:#000;letter-spacing:0.12px;">Your contact</div>
<div class="t" style="left:913px;top:371px;font-size:12px;color:#000;letter-spacing:0.12px;">Anton Admin</div>
<div class="t" style="left:818px;top:385px;font-size:12px;color:#000;letter-spacing:0.12px;">EMail</div>
<div class="t" style="left:913px;top:385px;font-size:12px;color:#000;letter-spacing:0.12px;">noreply@ingenious.de</div>
<div class="t" style="left:818px;top:399px;font-size:12px;color:#000;letter-spacing:0.12px;">Phone</div>
<div class="t" style="left:913px;top:399px;font-size:12px;color:#000;letter-spacing:0.12px;">0123/456789</div>
<div class="t" style="left:818px;top:413px;font-size:12px;color:#000;letter-spacing:0.12px;">Fax</div>
<div class="t" style="left:913px;top:413px;font-size:12px;color:#000;letter-spacing:0.12px;">0123/456780</div>
<div class="t" style="left:818px;top:442px;font-size:12px;color:#000;letter-spacing:0.12px;">Date</div>
<div class="t" style="left:913px;top:442px;font-size:12px;color:#000;letter-spacing:0.12px;">7/1/2020</div>
<div class="r" style="left:434px;top:555px;width:645px;height:33px;background:transparent;box-sizing:border-box;border:1px solid #000"></div>
<div class="t" style="left:439px;top:558px;font-size:12px;color:#000;font-weight:bold;letter-spacing:0.25px;">PosNo</div>
<div class="t" style="left:485px;top:558px;font-size:12px;color:#000;font-weight:bold;letter-spacing:0.25px;">ItemNo</div>
<div class="t" style="left:534px;top:557px;font-size:12px;color:#000;font-weight:bold;letter-spacing:0.25px;">Description</div>
<div class="t" style="left:437px;top:572px;font-size:12px;color:#000;font-weight:bold;letter-spacing:0.25px;">.</div>
<div class="t" style="left:486px;top:572px;font-size:12px;color:#000;font-weight:bold;letter-spacing:0.25px;">.</div>
<div class="t" style="left:536px;top:571px;font-size:11px;color:#000;font-weight:bold;letter-spacing:0.25px;">Width</div>
<div class="t" style="left:620px;top:571px;font-size:11px;color:#000;font-weight:bold;letter-spacing:0.25px;">Height</div>
<div class="t" style="left:715px;top:571px;font-size:11px;color:#000;font-weight:bold;letter-spacing:0.25px;">Surface</div>
<div class="t" style="left:811px;top:558px;font-size:12px;color:#000;font-weight:bold;letter-spacing:0.25px;">Quantity</div>
<div class="t" style="right:672px;top:558px;font-size:12px;color:#000;font-weight:bold;">SP &euro;</div>
<div class="t" style="left:940px;top:558px;font-size:12px;color:#000;font-weight:bold;letter-spacing:0.25px;">Rebate</div>
<div class="t" style="left:987px;top:557px;font-size:11px;color:#000;font-weight:bold;letter-spacing:0.25px;">tax</div>
<div class="t" style="right:524px;top:558px;font-size:12px;color:#000;font-weight:bold;">GP &euro;</div>
<div class="t" style="left:439px;top:593px;font-size:12px;color:#000;letter-spacing:0.12px;">001</div>
<div class="t" style="left:534px;top:593px;font-size:12px;color:#000;letter-spacing:0.12px;">Example article with regular VAT rate</div>
<div class="t" style="right:742px;top:593px;font-size:12px;color:#000;">1</div>
<div class="t" style="right:672px;top:593px;font-size:12px;color:#000;">100.00</div>
<div class="t" style="right:598px;top:593px;font-size:11px;color:#000;">16</div>
<div class="t" style="right:522px;top:593px;font-size:12px;color:#000;">100.00</div>
<div class="r" style="left:434px;top:629px;width:645px;height:93px;background:transparent;box-sizing:border-box;border:1px solid #000"></div>
<div class="r" style="left:807px;top:629px;width:1px;height:93px;background:#000;"></div>
<div class="t" style="left:438px;top:638px;font-size:12px;color:#000;font-weight:bold;letter-spacing:0.25px;">Payment terms:</div>
<div class="t" style="left:435px;top:660px;font-size:12px;color:#000;letter-spacing:0.12px;">Within 7 days with 2.00% discount or within 14 days in total.</div>
<div class="t" style="left:812px;top:637px;font-size:12px;color:#000;font-weight:bold;letter-spacing:0.25px;">Total net</div>
<div class="t" style="right:525px;top:637px;font-size:12px;color:#000;font-weight:bold;">100.00</div>
<div class="t" style="left:812px;top:659px;font-size:12px;color:#000;letter-spacing:0.12px;">VAT 16 %</div>
<div class="t" style="left:901px;top:659px;font-size:11px;color:#000;letter-spacing:0.12px;">on 100.00 &euro;</div>
<div class="t" style="right:525px;top:659px;font-size:12px;color:#000;">16.00</div>
<div class="t" style="left:812px;top:680px;font-size:12px;color:#000;letter-spacing:0.12px;">VAT 5 %</div>
<div class="t" style="left:901px;top:680px;font-size:11px;color:#000;letter-spacing:0.12px;">on 0.00 &euro;</div>
<div class="t" style="right:526px;top:680px;font-size:12px;color:#000;">0.00</div>
<div class="t" style="left:812px;top:702px;font-size:12px;color:#000;font-weight:bold;letter-spacing:0.25px;">Gross total</div>
<div class="t" style="right:525px;top:702px;font-size:12px;color:#000;font-weight:bold;">116.00</div>
</body></html>
